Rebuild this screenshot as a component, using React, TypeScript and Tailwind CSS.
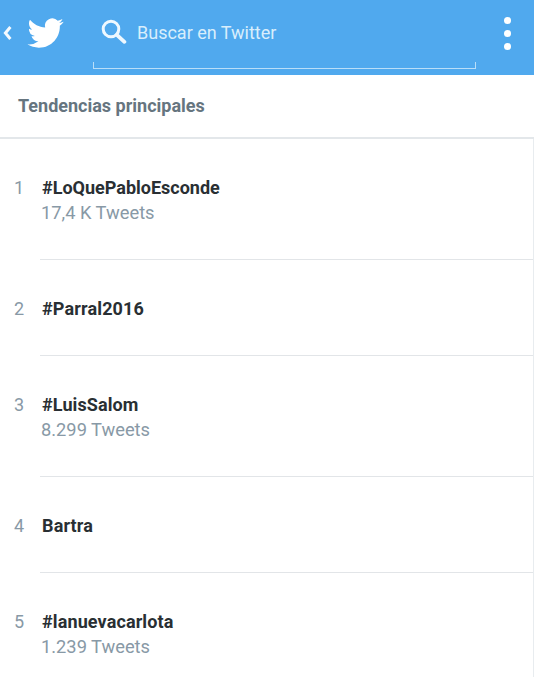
const trends = [
  { n: 1, title: "#LoQuePabloEsconde", sub: "17,4 K Tweets", track: "" },
  { n: 2, title: "#Parral2016", track: "tracking-[0.15px]" },
  { n: 3, title: "#LuisSalom", sub: "8.299 Tweets", track: "tracking-[0.1px]" },
  { n: 4, title: "Bartra", track: "tracking-[0.15px]" },
  { n: 5, title: "#lanuevacarlota", sub: "1.239 Tweets", track: "tracking-[0.12px]" },
];

function Header() {
  return (
    <header className="flex h-[75px] shrink-0 items-start bg-[#50a9ee]">
      <svg className="ml-[3px] mt-[25px] h-[16px] w-[9px]" viewBox="0 0 9 16" fill="none">
        <path d="M7.4 2 L2.4 8 L7.4 14" stroke="#f4faff" strokeWidth="3" />
      </svg>
      <svg className="ml-[15px] mt-[15px] h-[36px] w-[37px]" viewBox="0 0 24 24" fill="#fff">
        <path d="M23.953 4.57a10 10 0 01-2.825.775 4.958 4.958 0 002.163-2.723c-.951.555-2.005.959-3.127 1.184a4.92 4.92 0 00-8.384 4.482C7.69 8.095 4.067 6.13 1.64 3.162a4.822 4.822 0 00-.666 2.475c0 1.71.87 3.213 2.188 4.096a4.904 4.904 0 01-2.228-.616v.06a4.923 4.923 0 003.946 4.827 4.996 4.996 0 01-2.212.085 4.936 4.936 0 004.604 3.417 9.867 9.867 0 01-6.102 2.105c-.39 0-.779-.023-1.17-.067a13.995 13.995 0 007.557 2.209c9.053 0 13.998-7.496 13.998-13.985 0-.21 0-.42-.015-.63A9.935 9.935 0 0024 4.59z" />
      </svg>
      <div className="relative ml-[29px] h-[69px] w-[383px] border-b border-[#b9def8]">
        <span className="absolute bottom-0 left-0 h-[6px] w-px bg-[#b9def8]" />
        <span className="absolute bottom-0 right-0 h-[6px] w-px bg-[#b9def8]" />
        <div className="flex items-start">
          <svg className="ml-[8px] mt-[19px] h-[26px] w-[26px]" viewBox="0 0 26 26" fill="none" stroke="#eef8ff">
            <circle cx="10" cy="10" r="7.8" strokeWidth="3" />
            <path d="M15.8 15.8 L23.4 22.8" strokeWidth="3.8" strokeLinecap="round" />
          </svg>
          <span className="ml-[10px] mt-[21px] text-[18px] leading-[24px] text-[#d8eefc]">Buscar en Twitter</span>
        </div>
      </div>
      <div className="ml-[28px] mt-[17px] flex flex-col gap-[6px]">
        <span className="h-[7px] w-[7px] rounded-full bg-white" />
        <span className="h-[7px] w-[7px] rounded-full bg-white" />
        <span className="h-[7px] w-[7px] rounded-full bg-white" />
      </div>
    </header>
  );
}

export default function App() {
  return (
    <div className="flex h-[677px] w-[534px] flex-col overflow-hidden bg-white font-['Roboto',sans-serif]">
      <Header />
      <div className="flex h-[64px] shrink-0 items-start border-b-2 border-[#e3e7ea] pl-[18px] pt-[19px]">
        <h2 className="text-[18px] font-bold leading-[24px] text-[#66757f]">Tendencias principales</h2>
      </div>
      <ol className="flex-1 border-r border-[#e8ecef]">
        {trends.map((t) => (
          <li key={t.n} className="flex items-start">
            <span className="w-[40px] shrink-0 pl-[14px] pt-[38px] text-[18px] leading-[22px] text-[#8899a6]">{t.n}</span>
            <div className={"flex-1 pl-[2px] pt-[38px] " + (t.n === 5 ? "" : "border-b border-[#e2e5e8]") + " " + (t.sub ? "pb-[34px]" : "pb-[35px]")}>
              <div className={"text-[18px] font-bold leading-[22px] text-[#292f33] " + t.track}>{t.title}</div>
              {t.sub && <div className="ml-[-1px] mt-[1px] text-[18.3px] leading-[25px] text-[#8899a6]">{t.sub}</div>}
            </div>
          </li>
        ))}
      </ol>
    </div>
  );
}
